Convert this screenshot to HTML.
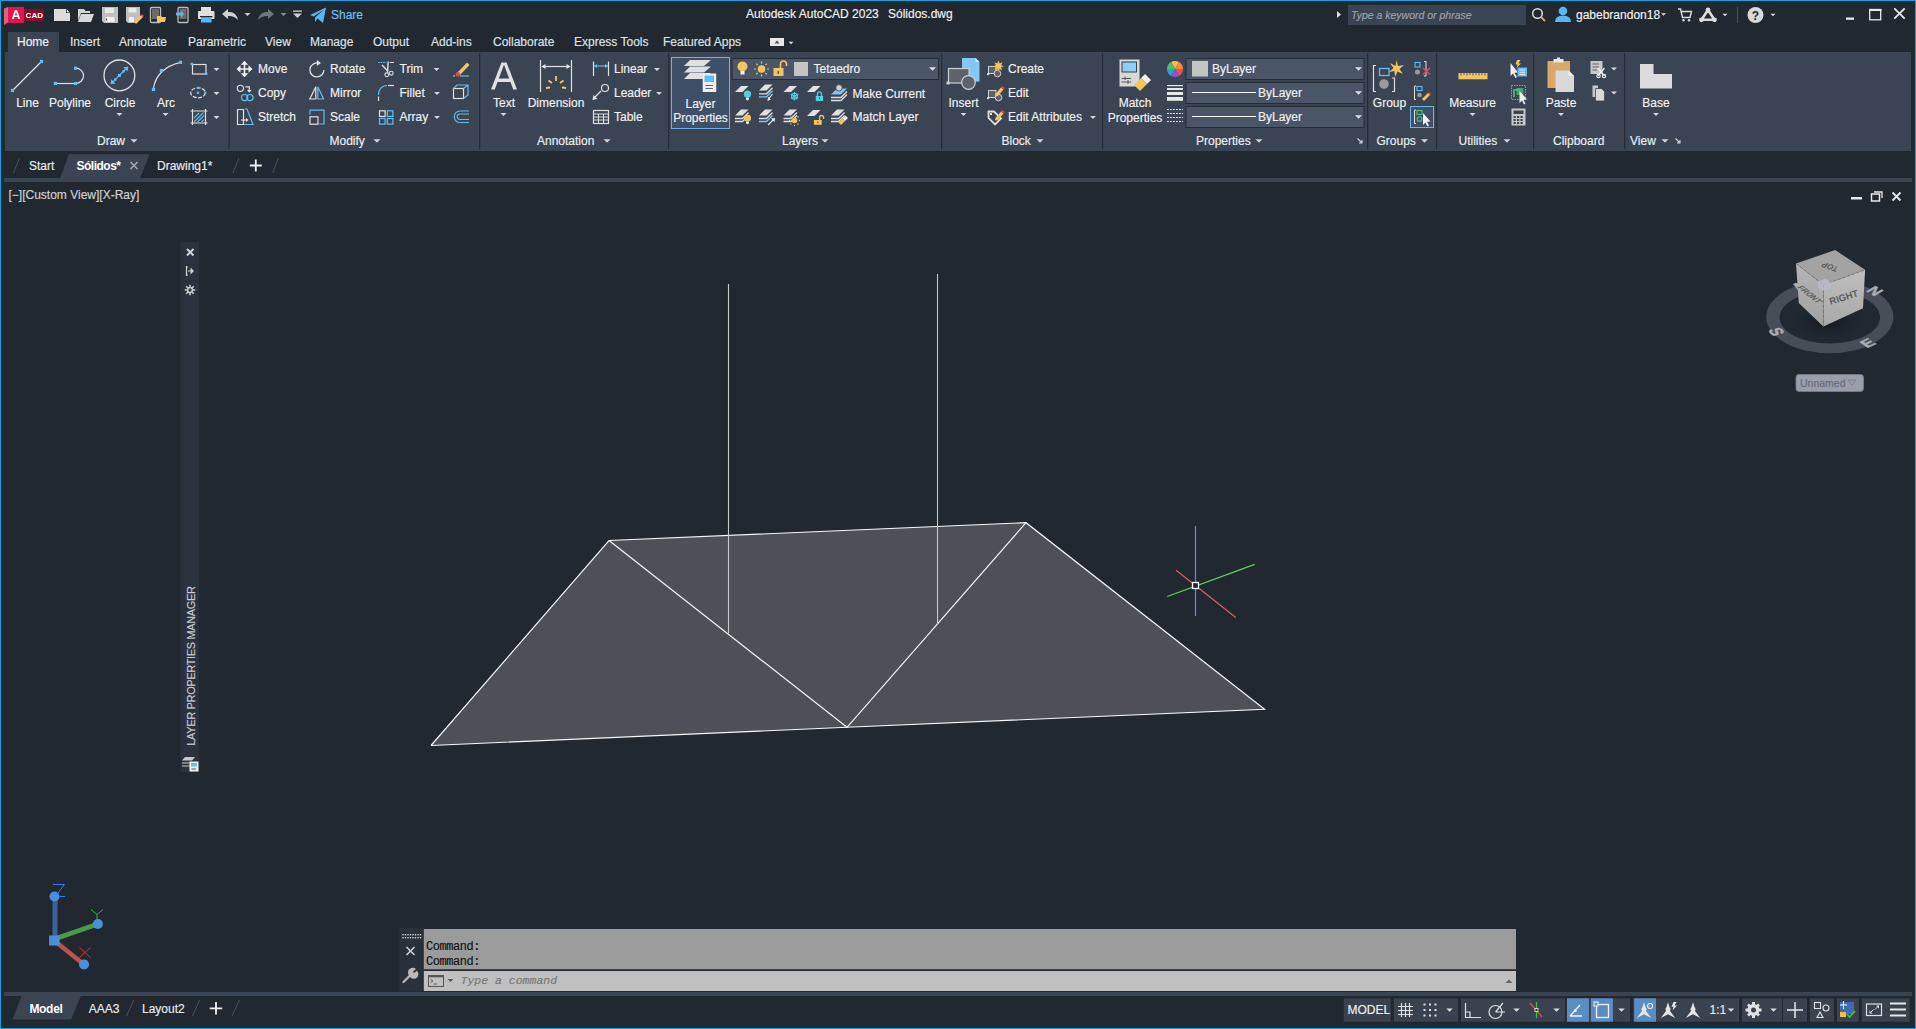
<!DOCTYPE html>
<html><head><meta charset="utf-8">
<style>
*{margin:0;padding:0;box-sizing:border-box}
html,body{width:1916px;height:1029px;overflow:hidden;background:#212830;font-family:"Liberation Sans",sans-serif;color:#f2f2f2}
svg{position:absolute;left:0;top:0}
.t{position:absolute;font-size:12px;white-space:nowrap;line-height:14px;height:14px;-webkit-text-stroke:0.15px currentColor}
.m{font-family:"Liberation Mono",monospace}
</style></head><body>
<svg width="1916" height="1029" viewBox="0 0 1916 1029">
<rect x="8" y="32" width="51" height="20" fill="#3b4453" />
<rect x="5" y="52" width="1906" height="99" fill="#3b4453" />
<rect x="228.5" y="53" width="1.2" height="96" fill="#262c36" />
<rect x="479.0" y="53" width="1.2" height="96" fill="#262c36" />
<rect x="668.0" y="53" width="1.2" height="96" fill="#262c36" />
<rect x="941.0" y="53" width="1.2" height="96" fill="#262c36" />
<rect x="1102.0" y="53" width="1.2" height="96" fill="#262c36" />
<rect x="1367.0" y="53" width="1.2" height="96" fill="#262c36" />
<rect x="1436.0" y="53" width="1.2" height="96" fill="#262c36" />
<rect x="1533.0" y="53" width="1.2" height="96" fill="#262c36" />
<rect x="1624.0" y="53" width="1.2" height="96" fill="#262c36" />
<rect x="4" y="178" width="1908" height="4" fill="#3b4453" />
<polygon points="60.3,178 68.9,154.2 149.5,154.2 140.1,178" fill="#3b4453"/>
<rect x="4" y="992" width="1908" height="4" fill="#3b4453" />
<polygon points="12.4,1019.6 21.5,996 80.9,996 71.1,1019.6" fill="#3b4453"/>
<rect x="0" y="0" width="1916" height="1" fill="#1a9fe3" />
<rect x="0" y="0" width="1" height="1029" fill="#1a9fe3" />
<rect x="1915" y="0" width="1" height="1029" fill="#1a9fe3" />
<rect x="0" y="1028" width="1916" height="1" fill="#1a9fe3" />
<polygon points="4,8.5 8,7 8,22.5 4,25" fill="#e06080"/>
<rect x="8" y="7" width="16" height="16" fill="#e3134d" />
<path d="M11.8,19 L14.8,10.3 L17.2,10.3 L20.2,19 L18.2,19 L17.6,17 L14.4,17 L13.8,19 Z M14.9,15.4 L17.1,15.4 L16,11.9 Z" fill="#fff"/>
<rect x="24" y="9" width="20" height="12" fill="#8a0a2c" />
<text x="25.5" y="18.2" font-family="Liberation Sans" font-weight="700" font-size="8" fill="#fff" letter-spacing="0.1">CAD</text>
<path d="M54,9 L66,9 L70,13 L70,21 L54,21 Z" fill="#dcdcdc"/><path d="M66,9 L70,13 L66,13 Z" fill="#212830"/><path d="M66.8,9.5 L69.5,12.2 L66.8,12.2Z" fill="#fff"/>
<path d="M78,9 L84,9 L85.5,11 L90,11 L90,13 L81,13 L78,21 Z" fill="#d4d4d4"/><path d="M81,14 L94,14 L91,22 L78,22 Z" fill="#d8d8d8"/>
<path d="M102,7 L118,7 L118,23 L104,23 L102,21 Z" fill="#bfbfbf"/><rect x="105" y="8" width="9" height="5" fill="#e8e8e8"/><rect x="105.5" y="17" width="9" height="5" fill="#f0f0f0"/><rect x="106" y="18.5" width="1" height="2" fill="#333"/>
<path d="M126,7 L140,7 L140,17 L134,23 L128,23 L126,21 Z" fill="#bfbfbf"/><rect x="128.5" y="8" width="8" height="4.5" fill="#e8e8e8"/><rect x="129" y="17" width="5" height="5" fill="#f0f0f0"/><path d="M134,22 L141,15 L143,17 L136,24 Z" fill="#f3c560"/><path d="M141,15 L142,14 L144,16 L143,17Z" fill="#e8455c"/>
<rect x="150.5" y="7.5" width="10" height="15" rx="1" fill="none" stroke="#bdbdbd" stroke-width="1.3"/><rect x="152" y="9" width="7" height="10" fill="#6b6b6b"/><path d="M157,16 L161,16 L162,17 L166,17 L165,22 L157,22Z" fill="#f3c560"/>
<rect x="178" y="7.5" width="10" height="15" rx="1" fill="none" stroke="#bdbdbd" stroke-width="1.3"/><rect x="179.5" y="9" width="7" height="10" fill="#6b6b6b"/><path d="M176,12.5 L181,12.5 L181,10.5 L184,14 L181,17.5 L181,15.5 L176,15.5Z" fill="#5ab6f2"/>
<rect x="201" y="7" width="10" height="4" fill="#e0e0e0"/><rect x="198" y="11" width="16.5" height="8" rx="1" fill="#e0e0e0"/><rect x="201" y="16.5" width="10.5" height="6" fill="#5ab6f2"/><rect x="200" y="16" width="12.5" height="1.2" fill="#212830"/>
<path d="M222,14 L228,9 L228,12 Q236,11 238,20 Q234,15.5 228,16 L228,19 Z" fill="#cfcfcf"/>
<polygon points="244.5,13.0 250.5,13.0 247.5,16.0" fill="#cfcfcf"/>
<path d="M274,14 L268,9 L268,12 Q260,11 258,20 Q262,15.5 268,16 L268,19 Z" fill="#6f7680"/>
<polygon points="280.5,13.0 286.5,13.0 283.5,16.0" fill="#8a9099"/>
<rect x="293" y="10.5" width="9" height="1.3" fill="#cfcfcf" />
<polygon points="293,13.5 302,13.5 297.5,18" fill="#cfcfcf"/>
<path d="M310,15 L326,7.5 L323,23 L317.5,18.5 L315,22 L315,17.5 L324,9.5 L313.5,16.5 Z" fill="#5ab6f2"/>
<polygon points="1337,11 1341,14.5 1337,18" fill="#e0e0e0"/>
<rect x="1348" y="5" width="178" height="20" fill="#3b4453" />
<circle cx="1537.5" cy="13.5" r="4.8" fill="none" stroke="#dcdcdc" stroke-width="1.5"/><line x1="1541" y1="17" x2="1545" y2="21" stroke="#e0a050" stroke-width="2"/>
<circle cx="1563" cy="11" r="4.3" fill="#5ab6f2"/><path d="M1555,22 Q1555,15.5 1563,15.5 Q1571,15.5 1571,22Z" fill="#5ab6f2"/>
<polygon points="1661.0,13.25 1666.0,13.25 1663.5,15.75" fill="#dcdcdc"/>
<path d="M1678,9 L1680.5,9 L1682.5,17.5 L1690,17.5 L1691.5,11.5 L1681.5,11.5" fill="none" stroke="#dcdcdc" stroke-width="1.4"/><circle cx="1683.5" cy="20.3" r="1.2" fill="#dcdcdc"/><circle cx="1689" cy="20.3" r="1.2" fill="#dcdcdc"/>
<path d="M1708,10 L1714.5,19.8 L1701.5,19.8 Z" fill="none" stroke="#dcdcdc" stroke-width="2.6" stroke-linejoin="round"/><circle cx="1708" cy="10" r="2.4" fill="#dcdcdc"/><circle cx="1701.5" cy="19.8" r="2.4" fill="#dcdcdc"/><circle cx="1714.5" cy="19.8" r="2.4" fill="#dcdcdc"/>
<polygon points="1722.5,13.75 1727.5,13.75 1725,16.25" fill="#dcdcdc"/>
<rect x="1737" y="7" width="1" height="16" fill="#4a5260" />
<circle cx="1755.5" cy="15" r="8" fill="#d8d8d8"/><text x="1755.5" y="19.5" text-anchor="middle" font-family="Liberation Sans" font-weight="700" font-size="12" fill="#212830">?</text>
<polygon points="1770.5,13.75 1775.5,13.75 1773,16.25" fill="#dcdcdc"/>
<rect x="1846" y="17.5" width="8" height="2.3" fill="#e8e8e8" />
<rect x="1869.7" y="9.5" width="11" height="10.3" fill="none" stroke="#e8e8e8" stroke-width="1.3"/><rect x="1869" y="9" width="12.5" height="2" fill="#e8e8e8"/>
<path d="M1894.3,8.3 L1904.7,18.7 M1904.7,8.3 L1894.3,18.7" stroke="#e8e8e8" stroke-width="1.8"/>
<rect x="770" y="38" width="14" height="8" fill="#e8e8e8" />
<polygon points="774.5,43.5 779.5,43.5 777,40.5" fill="#555"/>
<polygon points="788.5,41.75 793.5,41.75 791,44.25" fill="#dcdcdc"/>
<line x1="13" y1="90" x2="41.5" y2="61.5" stroke="#e0e0e0" stroke-width="1.2"/>
<rect x="10.9" y="88.9" width="3.2" height="3.2" fill="#62bcf5"/>
<rect x="39.9" y="59.9" width="3.2" height="3.2" fill="#62bcf5"/>
<line x1="55.5" y1="83.5" x2="75.5" y2="83.5" stroke="#e0e0e0" stroke-width="1.2"/><path d="M75.5,68.2 A8,7.65 0 0 1 75.5,83.5" fill="none" stroke="#e0e0e0" stroke-width="1.2"/>
<rect x="53.8" y="81.9" width="3.2" height="3.2" fill="#62bcf5"/>
<rect x="74.0" y="81.9" width="3.2" height="3.2" fill="#62bcf5"/>
<rect x="74.0" y="66.60000000000001" width="3.2" height="3.2" fill="#62bcf5"/>
<circle cx="119.4" cy="75.4" r="15.4" fill="none" stroke="#e0e0e0" stroke-width="1.3"/>
<line x1="111.5" y1="83.3" x2="127.3" y2="67.5" stroke="#62bcf5" stroke-width="1.2"/><polygon points="110.5,84.3 111.3,79.2 115.6,83.5" fill="#62bcf5"/><polygon points="128.3,66.5 123.2,67.3 127.5,71.6" fill="#62bcf5"/>
<rect x="117.9" y="73.9" width="3" height="3" fill="#62bcf5"/>
<rect x="114.0" y="78.39999999999999" width="2.4" height="2.4" fill="#62bcf5"/>
<rect x="122.39999999999999" y="70.0" width="2.4" height="2.4" fill="#62bcf5"/>
<polygon points="116.4,113.0 122.4,113.0 119.4,116.0" fill="#d8d8d8"/>
<path d="M153.5,88 Q157,68 180.5,62.3" fill="none" stroke="#e0e0e0" stroke-width="1.2"/>
<rect x="151.9" y="87.9" width="3.2" height="3.2" fill="#62bcf5"/>
<rect x="159.8" y="68.9" width="3.2" height="3.2" fill="#62bcf5"/>
<rect x="178.9" y="60.699999999999996" width="3.2" height="3.2" fill="#62bcf5"/>
<polygon points="162.5,113.0 168.5,113.0 165.5,116.0" fill="#d8d8d8"/>
<rect x="192.5" y="64.5" width="13.5" height="9.5" fill="none" stroke="#e0e0e0" stroke-width="1.2"/>
<rect x="190.55" y="62.75" width="2.5" height="2.5" fill="#62bcf5"/>
<rect x="204.95" y="72.55" width="2.5" height="2.5" fill="#62bcf5"/>
<polygon points="213.5,68.0 219.5,68.0 216.5,71.0" fill="#d8d8d8"/>
<ellipse cx="198" cy="92.8" rx="7.3" ry="5" fill="none" stroke="#e0e0e0" stroke-width="1.2" stroke-dasharray="4,1.5"/>
<rect x="196.9" y="91.7" width="2.2" height="2.2" fill="#62bcf5"/>
<rect x="204.1" y="91.7" width="2.2" height="2.2" fill="#62bcf5"/>
<rect x="196.9" y="86.7" width="2.2" height="2.2" fill="#62bcf5"/>
<polygon points="213.5,92.0 219.5,92.0 216.5,95.0" fill="#d8d8d8"/>
<path d="M190.5,111 L207.5,111 M190.5,123 L207.5,123 M192.5,109 L192.5,125 M205.5,109 L205.5,125" stroke="#e0e0e0" stroke-width="1.2"/>
<path d="M194,118 L199,113 M194,122 L203.5,112.5 M197.5,122 L204,115.5 M201.5,122 L204,119.5" stroke="#62bcf5" stroke-width="1.1"/>
<polygon points="213.5,116.0 219.5,116.0 216.5,119.0" fill="#d8d8d8"/>
<polygon points="130.5,139.25 137.5,139.25 134,142.75" fill="#d4d4d4"/>
<path d="M244.5,63 L244.5,75 M238.5,69 L250.5,69" stroke="#f0f0f0" stroke-width="1.6"/><polygon points="244.5,60.8 240.8,64.8 248.2,64.8" fill="#f0f0f0"/><polygon points="244.5,77.2 240.8,73.2 248.2,73.2" fill="#f0f0f0"/><polygon points="236.5,69 240.5,65.3 240.5,72.7" fill="#f0f0f0"/><polygon points="252.5,69 248.5,65.3 248.5,72.7" fill="#f0f0f0"/>
<path d="M323.9,70 A7,7 0 1 1 317.5,63" fill="none" stroke="#e0e0e0" stroke-width="1.3"/><polygon points="316.8,60 316.8,66 321,63" fill="#e0e0e0"/>
<path d="M378.2,62.5 L386.3,62.5" stroke="#62bcf5" stroke-width="1" stroke-dasharray="1.6,0.9"/><path d="M389.8,62.5 L394,62.5" stroke="#e0e0e0" stroke-width="1"/>
<path d="M382,65 L388.2,71.5 M388.2,61.5 L387.5,72.5" stroke="#e0e0e0" stroke-width="1.4"/><circle cx="386.8" cy="74.8" r="1.9" fill="none" stroke="#e0e0e0" stroke-width="1.1"/><circle cx="391.2" cy="73.2" r="1.9" fill="none" stroke="#e0e0e0" stroke-width="1.1"/>
<polygon points="433.5,68.0 439.5,68.0 436.5,71.0" fill="#d8d8d8"/>
<path d="M457,73 L467,62.5 L469.5,65 L459.5,75.5 Z" fill="#f3c560"/><circle cx="457.8" cy="74.2" r="2.2" fill="#e8455c"/><line x1="460" y1="76" x2="469" y2="76" stroke="#62bcf5" stroke-width="1.2"/><line x1="453" y1="76" x2="455" y2="76" stroke="#e0e0e0" stroke-width="1"/>
<circle cx="240.4" cy="88.3" r="3.1" fill="none" stroke="#e0e0e0" stroke-width="1.1"/><path d="M245.3,86.8 L249.3,86.8 L249.3,90.5" fill="none" stroke="#e0e0e0" stroke-width="1.2"/><polygon points="247,90 251.6,90 249.3,92.8" fill="#e0e0e0"/>
<circle cx="244.6" cy="97.6" r="3.1" fill="none" stroke="#62bcf5" stroke-width="1.2"/><circle cx="250" cy="97.6" r="3.1" fill="none" stroke="#62bcf5" stroke-width="1.2"/>
<polygon points="315.8,86.8 315.8,99 309.8,99" fill="none" stroke="#e0e0e0" stroke-width="1.2"/><polygon points="317.8,86.8 317.8,99 323.6,99" fill="none" stroke="#62bcf5" stroke-width="1.2"/>
<path d="M378.5,95 Q378.5,86 387,85.5" fill="none" stroke="#62bcf5" stroke-width="1.2"/><path d="M378.5,96.5 L378.5,101" stroke="#e0e0e0" stroke-width="1.2"/><line x1="388" y1="85.5" x2="394" y2="85.5" stroke="#e0e0e0" stroke-width="1.2"/>
<polygon points="434.0,92.0 440.0,92.0 437,95.0" fill="#d8d8d8"/>
<rect x="453.5" y="88.5" width="10" height="10" fill="none" stroke="#e0e0e0" stroke-width="1.2"/><path d="M453.5,88.5 L457,85 L468,85 L468,95 L463.5,98.5 M463.5,88.5 L468,85" fill="none" stroke="#62bcf5" stroke-width="1.2"/>
<path d="M237.5,109.5 L243.5,109.5 L243.5,124.5 L237.5,124.5 Z" fill="none" stroke="#e0e0e0" stroke-width="1.2"/><path d="M245,109 L247,109 L253,124.5 L244,124.5" fill="none" stroke="#62bcf5" stroke-width="1.2"/><path d="M241,120 L247,120" stroke="#e0e0e0" stroke-width="1.2"/><polygon points="248.5,120 246,118 246,122" fill="#e0e0e0"/>
<path d="M310,114.5 L310,110.2 L324,110.2 L324,124 L319.3,124" fill="none" stroke="#62bcf5" stroke-width="1.2"/><rect x="310" y="116.8" width="8" height="7.4" fill="none" stroke="#e0e0e0" stroke-width="1.2"/>
<rect x="379.5" y="110.8" width="5.6" height="5.6" fill="none" stroke="#e0e0e0" stroke-width="1.2"/>
<rect x="379.5" y="118.5" width="5.6" height="5.6" fill="none" stroke="#62bcf5" stroke-width="1.2"/>
<rect x="387.3" y="110.8" width="5.6" height="5.6" fill="none" stroke="#62bcf5" stroke-width="1.2"/>
<rect x="387.3" y="118.5" width="5.6" height="5.6" fill="none" stroke="#62bcf5" stroke-width="1.2"/>
<polygon points="434.0,116.0 440.0,116.0 437,119.0" fill="#d8d8d8"/>
<path d="M469,111 L460,111 A5.5,5.5 0 0 0 460,122.5 L469,122.5 M469,114 L460,114 A2.6,2.6 0 0 0 460,119.5 L469,119.5" fill="none" stroke="#62bcf5" stroke-width="1.2"/>
<polygon points="373.5,139.25 380.5,139.25 377,142.75" fill="#d4d4d4"/>
<path d="M501.5,62.5 L506.5,62.5 L517,89.5 L513.2,89.5 L510.5,82 L497.5,82 L494.8,89.5 L491,89.5 Z M498.8,78.5 L509.2,78.5 L504,64.8 Z" fill="#e0e0e0"/>
<polygon points="500.5,113.0 506.5,113.0 503.5,116.0" fill="#d8d8d8"/>
<path d="M540.5,60 L540.5,92 M571.5,60 L571.5,92" stroke="#e0e0e0" stroke-width="1.2"/><path d="M542,66.5 L570,66.5" stroke="#e4e4e4" stroke-width="1.2"/><polygon points="541.5,66.5 545.5,64 545.5,69" fill="#e4e4e4"/><polygon points="570.5,66.5 566.5,64 566.5,69" fill="#e4e4e4"/>
<path d="M556,76 L556,81 M548.5,80.5 L552,83 M563.5,80.5 L560,83 M546,88 L550,87.5 M566,88 L562,87.5" stroke="#f3c560" stroke-width="1.8"/>
<path d="M593.5,61.5 L593.5,76 M608.5,61.5 L608.5,76" stroke="#e0e0e0" stroke-width="1.2"/><path d="M594,66 L608,66" stroke="#62bcf5" stroke-width="1.2"/><polygon points="594,66 597,64 597,68" fill="#62bcf5"/><polygon points="608,66 605,64 605,68" fill="#62bcf5"/>
<polygon points="654.0,68.0 660.0,68.0 657,71.0" fill="#d8d8d8"/>
<path d="M593,99 L601,91" stroke="#e0e0e0" stroke-width="1.2"/><polygon points="592.5,100 593.5,95 597.5,99" fill="#e0e0e0"/><circle cx="605" cy="88" r="3.5" fill="none" stroke="#e0e0e0" stroke-width="1.2"/>
<polygon points="656.0,92.0 662.0,92.0 659,95.0" fill="#d8d8d8"/>
<rect x="593.5" y="110.5" width="15" height="13" fill="none" stroke="#e0e0e0" stroke-width="1.2"/><path d="M593.5,114 L608.5,114 M593.5,117 L608.5,117 M593.5,120 L608.5,120 M598.5,114 L598.5,123.5 M603.5,114 L603.5,123.5" stroke="#e0e0e0" stroke-width="1"/>
<polygon points="603.5,139.25 610.5,139.25 607,142.75" fill="#d4d4d4"/>
<rect x="671.5" y="57.5" width="58" height="71" fill="#3e5068" stroke="#6fb3e3" stroke-width="1"/>
<polygon points="690,60 711,60 704,66 684,66" fill="#e0e0e0"/>
<polygon points="690,66.5 711,66.5 704,72.5 684,72.5" fill="#e0e0e0"/>
<polygon points="690,73 711,73 704,79 684,79" fill="#e0e0e0"/>
<rect x="702.7" y="73.5" width="13.5" height="18.5" fill="#f0f0f0" />
<rect x="704.5" y="75.5" width="9.5" height="6.5" fill="#62bcf5" />
<path d="M705.5,85.5 L713,85.5 M705.5,88.5 L713,88.5" stroke="#555" stroke-width="0.9"/>
<rect x="732" y="58.5" width="206.5" height="21" fill="#4a5568" stroke="#262c36" stroke-width="1"/>
<circle cx="742.5" cy="66.5" r="5" fill="#f3c560"/><rect x="740.5" y="71" width="4" height="3.5" fill="#f0f0f0"/>
<circle cx="761.5" cy="69" r="3.8" fill="#f3c560"/><path d="M761.5,61.5 L761.5,63.5 M761.5,74.5 L761.5,76.5 M754,69 L756,69 M767,69 L769,69 M756.2,63.7 L757.6,65.1 M765.4,72.9 L766.8,74.3 M766.8,63.7 L765.4,65.1 M757.6,72.9 L756.2,74.3" stroke="#f3c560" stroke-width="1.2"/>
<rect x="773.5" y="68" width="10" height="8" fill="#f3c560"/><path d="M780.5,68 L780.5,64 A3,3 0 0 1 786.5,64 L786.5,66" fill="none" stroke="#f3c560" stroke-width="1.6"/><rect x="777.5" y="71" width="1.5" height="3" fill="#4a5568"/>
<rect x="794" y="62" width="14" height="14" fill="#c4c4c4" />
<polygon points="929.0,67.25 936.0,67.25 932.5,70.75" fill="#e0e0e0"/>
<polygon points="735,92 741,86 748.5,86 742.5,92" fill="#e0e0e0"/>
<circle cx="747.5" cy="94.2" r="3.6" fill="#4fd0dc"/><path d="M746,97.8 L749,97.8 L749,99.5 L747.5,100.5 L746,99.5Z" fill="#f0f0f0"/>
<polygon points="759,90.5 765,84.5 772.5,84.5 766.5,90.5" fill="#e0e0e0"/>
<path d="M759,93.8 L766.5,93.8 L772.5,87.8" fill="none" stroke="#e0e0e0" stroke-width="1.3"/>
<path d="M759,96.8 L766.5,96.8 L772.5,90.8" fill="none" stroke="#7cc4f5" stroke-width="1.3"/>
<path d="M772.5,94 L768.2,99.5" stroke="#f0f0f0" stroke-width="1.1"/><polygon points="767.5,101 768,96.8 771,99.5" fill="#f0f0f0"/>
<polygon points="783.5,92 789.5,86 797.0,86 791.0,92" fill="#e0e0e0"/>
<g stroke="#4fd0dc" stroke-width="1.2"><path d="M794.5,92 L794.5,100.6 M790.8,94.1 L798.2,98.5 M798.2,94.1 L790.8,98.5"/></g><circle cx="794.5" cy="96.3" r="3" fill="none" stroke="#4fd0dc" stroke-width="1.1"/>
<polygon points="807,92 813,86 820.5,86 814.5,92" fill="#e0e0e0"/>
<rect x="815.8" y="96" width="7.3" height="5" fill="#4fd0dc"/><path d="M817.4,96 L817.4,94 A2.05,2.05 0 0 1 821.5,94 L821.5,96" fill="none" stroke="#4fd0dc" stroke-width="1.3"/><rect x="819" y="97.6" width="1" height="1.5" fill="#3b4453"/>
<polygon points="831,94.5 837,88.5 847,88.5 841,94.5" fill="#7cc4f5"/>
<path d="M831,97.5 L841,97.5 L847,91.5" fill="none" stroke="#e0e0e0" stroke-width="1.3"/>
<path d="M831,100.5 L841,100.5 L847,94.5" fill="none" stroke="#e0e0e0" stroke-width="1.3"/>
<circle cx="839" cy="87.8" r="3.2" fill="#cfcfcf" stroke="#3b4453" stroke-width="0.8"/>
<polygon points="735,115.5 741,109.5 748.5,109.5 742.5,115.5" fill="#e0e0e0"/>
<path d="M735,118.5 L742.5,118.5 L748.5,112.5" fill="none" stroke="#e0e0e0" stroke-width="1.3"/>
<path d="M735,121.5 L742.5,121.5 L748.5,115.5" fill="none" stroke="#e0e0e0" stroke-width="1.3"/>
<circle cx="747.5" cy="118" r="3.6" fill="#f3c560"/><path d="M746,121.6 L749,121.6 L749,123.3 L747.5,124.3 L746,123.3Z" fill="#f0f0f0"/>
<polygon points="759,115.5 765,109.5 772.5,109.5 766.5,115.5" fill="#e0e0e0"/>
<path d="M759,118.5 L766.5,118.5 L772.5,112.5" fill="none" stroke="#e0e0e0" stroke-width="1.3"/>
<path d="M759,121.5 L766.5,121.5 L772.5,115.5" fill="none" stroke="#7cc4f5" stroke-width="1.3"/>
<path d="M768,125 L773.5,119.5" stroke="#f0f0f0" stroke-width="1.1"/><polygon points="775,118 771,118.5 774.5,122" fill="#f0f0f0"/>
<polygon points="783.5,115.5 789.5,109.5 797.0,109.5 791.0,115.5" fill="#e0e0e0"/>
<path d="M783.5,118.5 L791.0,118.5 L797.0,112.5" fill="none" stroke="#e0e0e0" stroke-width="1.3"/>
<path d="M783.5,121.5 L791.0,121.5 L797.0,115.5" fill="none" stroke="#e0e0e0" stroke-width="1.3"/>
<circle cx="794.5" cy="120.5" r="2.8" fill="#f3c560"/>
<circle cx="799.50" cy="120.50" r="0.7" fill="#f3c560"/>
<circle cx="798.04" cy="124.04" r="0.7" fill="#f3c560"/>
<circle cx="794.50" cy="125.50" r="0.7" fill="#f3c560"/>
<circle cx="790.96" cy="124.04" r="0.7" fill="#f3c560"/>
<circle cx="789.50" cy="120.50" r="0.7" fill="#f3c560"/>
<circle cx="790.96" cy="116.96" r="0.7" fill="#f3c560"/>
<circle cx="794.50" cy="115.50" r="0.7" fill="#f3c560"/>
<circle cx="798.04" cy="116.96" r="0.7" fill="#f3c560"/>
<polygon points="807,116 813,110 820.5,110 814.5,116" fill="#e0e0e0"/>
<rect x="813.9" y="120" width="7.8" height="4.8" fill="#f3c560"/><path d="M819.6,120 L819.6,117.5 A2,2 0 0 1 823.6,117.5 L823.6,119" fill="none" stroke="#f3c560" stroke-width="1.3"/><rect x="817.3" y="121.6" width="1" height="1.4" fill="#3b4453"/>
<polygon points="831,115.5 837,109.5 844.5,109.5 838.5,115.5" fill="#e0e0e0"/>
<path d="M831,118.5 L838.5,118.5 L844.5,112.5" fill="none" stroke="#e0e0e0" stroke-width="1.3"/>
<path d="M831,121.5 L838.5,121.5 L844.5,115.5" fill="none" stroke="#e0e0e0" stroke-width="1.3"/>
<path d="M838.5,122.5 L842.5,118.5 L845,121 L841,125Z" fill="#f3c560"/><path d="M842.5,118.5 L845.5,115.5 L848,118 L845,121Z" fill="#f0f0f0"/>
<polygon points="821.5,139.25 828.5,139.25 825,142.75" fill="#d4d4d4"/>
<path d="M962,58 L975.5,58 L979.5,62 L979.5,81.5 L962,81.5 Z" fill="#82c8f6"/><path d="M975.5,58 L979.5,62 L975.5,62Z" fill="#d8eefc"/>
<rect x="948.5" y="68.5" width="20.5" height="14.5" fill="#5d626c" stroke="#cfcfcf" stroke-width="1.2"/><circle cx="968.5" cy="82.5" r="6.8" fill="#5d626c" stroke="#cfcfcf" stroke-width="1.2"/><rect x="946.5" y="81.5" width="3" height="3" fill="#cfcfcf"/>
<polygon points="960.5,113.0 966.5,113.0 963.5,116.0" fill="#d8d8d8"/>
<rect x="988.5" y="66.5" width="7.5" height="7" fill="#5d626c" stroke="#cfcfcf" stroke-width="1"/><circle cx="997.5" cy="73.5" r="3.3" fill="#5d626c" stroke="#cfcfcf" stroke-width="1"/><rect x="987" y="73" width="2.2" height="2.2" fill="#cfcfcf"/>
<polygon points="998.6,60.5 999.6,63.5 1002.5,62.2 1001.2,65.2 1004,66.3 1001,67.3 1002.2,70.2 999.4,69 998.4,71.8 997.4,69 994.6,70.2 995.8,67.3 993,66.3 995.8,65.2 994.6,62.2 997.4,63.5" fill="#f3c560"/>
<rect x="988.5" y="90.5" width="7.5" height="7" fill="#5d626c" stroke="#cfcfcf" stroke-width="1"/><circle cx="998.5" cy="97.5" r="3.3" fill="#5d626c" stroke="#cfcfcf" stroke-width="1"/><rect x="987" y="97" width="2.2" height="2.2" fill="#cfcfcf"/>
<path d="M995.5,94 L1001,87.5 L1003.5,89.5 L998,96 L995,96.5Z" fill="#f3c560"/><path d="M1001,87.5 L1002.2,86 L1004.7,88 L1003.5,89.5Z" fill="#e8455c"/>
<path d="M988.5,111.5 L994,111.5 L1001,118.5 L995,124.5 L988.5,118 Z" fill="none" stroke="#e0e0e0" stroke-width="1.8"/><rect x="990" y="113" width="2" height="2" fill="#e0e0e0"/>
<path d="M995.5,118 L1001,111.5 L1003.5,113.5 L998,120 L995,120.5Z" fill="#f3c560"/><path d="M1001,111.5 L1002.2,110 L1004.7,112 L1003.5,113.5Z" fill="#e8455c"/>
<polygon points="1090.0,116.0 1096.0,116.0 1093,119.0" fill="#d8d8d8"/>
<polygon points="1036.5,139.25 1043.5,139.25 1040,142.75" fill="#d4d4d4"/>
<rect x="1119.5" y="59.5" width="20" height="27" fill="#d8d8d8" />
<rect x="1122" y="62" width="14.5" height="10" fill="#8ccff8" stroke="#2a2f38" stroke-width="0.9"/>
<path d="M1121.5,78.5 L1131,78.5 M1121.5,82 L1131,82 M1125,76.5 L1125,80 M1128,80 L1128,84" stroke="#555" stroke-width="1"/>
<path d="M1134,85 L1141,78 L1147,84 L1140,91 Z" fill="#f3c560"/><path d="M1141,78 L1145,74 L1151,80 L1147,84Z" fill="#f0f0f0"/>
<path d="M1175,69 L1171.00,62.07 A8,8 0 0 1 1179.00,62.07 Z" fill="#f6c13c"/>
<path d="M1175,69 L1179.00,62.07 A8,8 0 0 1 1183.00,69.00 Z" fill="#f5883a"/>
<path d="M1175,69 L1183.00,69.00 A8,8 0 0 1 1179.00,75.93 Z" fill="#e8505a"/>
<path d="M1175,69 L1179.00,75.93 A8,8 0 0 1 1171.00,75.93 Z" fill="#8a4fe0"/>
<path d="M1175,69 L1171.00,75.93 A8,8 0 0 1 1167.00,69.00 Z" fill="#1fa8d0"/>
<path d="M1175,69 L1167.00,69.00 A8,8 0 0 1 1171.00,62.07 Z" fill="#4cbf70"/>
<rect x="1167" y="85" width="16" height="1.2" fill="#e8e8e8" />
<rect x="1167" y="88" width="16" height="2" fill="#e8e8e8" />
<rect x="1167" y="92" width="16" height="3" fill="#e8e8e8" />
<rect x="1167" y="97" width="16" height="3.8" fill="#e8e8e8" />
<line x1="1167" y1="109.5" x2="1183" y2="109.5" stroke="#e0e0e0" stroke-width="1.2" stroke-dasharray="2,1"/>
<line x1="1167" y1="113.5" x2="1183" y2="113.5" stroke="#e0e0e0" stroke-width="1.2" stroke-dasharray="2,1"/>
<line x1="1167" y1="117.5" x2="1183" y2="117.5" stroke="#e0e0e0" stroke-width="1.2" stroke-dasharray="2,1"/>
<line x1="1167" y1="121.5" x2="1183" y2="121.5" stroke="#e0e0e0" stroke-width="1.2" stroke-dasharray="2,1"/>
<rect x="1186" y="58.5" width="178" height="21" fill="#4a5568" stroke="#262c36" stroke-width="1"/>
<polygon points="1355.0,67.25 1362.0,67.25 1358.5,70.75" fill="#e0e0e0"/>
<rect x="1186" y="82.5" width="178" height="21" fill="#4a5568" stroke="#262c36" stroke-width="1"/>
<polygon points="1355.0,91.25 1362.0,91.25 1358.5,94.75" fill="#e0e0e0"/>
<rect x="1186" y="106.5" width="178" height="21" fill="#4a5568" stroke="#262c36" stroke-width="1"/>
<polygon points="1355.0,115.25 1362.0,115.25 1358.5,118.75" fill="#e0e0e0"/>
<rect x="1192" y="61" width="16" height="15.5" fill="#c4c4c4" />
<rect x="1192" y="92" width="64" height="1" fill="#fafafa" />
<rect x="1192" y="116" width="64" height="1" fill="#fafafa" />
<polygon points="1255.5,139.25 1262.5,139.25 1259,142.75" fill="#d4d4d4"/>
<path d="M1357.5,138.5 L1362,143 M1362,140 L1362,143 L1359,143" stroke="#d4d4d4" stroke-width="1.1" fill="none"/>
<path d="M1376,65.5 L1373.5,65.5 L1373.5,91.5 L1376,91.5 M1392,78 L1394.5,78 L1394.5,91.5 L1392,91.5" fill="none" stroke="#e0e0e0" stroke-width="1.2"/>
<rect x="1379.5" y="68.5" width="9.5" height="7" fill="none" stroke="#62bcf5" stroke-width="1.3"/>
<circle cx="1384" cy="84" r="4.8" fill="#9a9a9a"/>
<polygon points="1396.5,60 1398,66 1404,65 1399.5,69 1403,74 1397.5,71.5 1395,77 1394.5,71 1389,72 1393.5,68 1390,63 1395.5,66" fill="#f3c560"/>
<rect x="1415" y="62.5" width="5" height="4.5" fill="none" stroke="#62bcf5" stroke-width="1.1"/><circle cx="1417.5" cy="72" r="2.5" fill="#9a9a9a"/><path d="M1424,61.5 L1426,61.5 L1426,76 L1424,76" fill="none" stroke="#e0e0e0" stroke-width="1"/><path d="M1423,68 L1430,74.5 M1430,68 L1423,74.5" stroke="#e8455c" stroke-width="1.6"/>
<path d="M1416,86 L1414.5,86 L1414.5,99.5 L1416,99.5" fill="none" stroke="#e0e0e0" stroke-width="1"/><rect x="1417" y="86.5" width="5" height="4" fill="none" stroke="#62bcf5" stroke-width="1.1"/><circle cx="1419.5" cy="95" r="2.3" fill="#9a9a9a"/><path d="M1422,99 L1428,93 L1430,95 L1424,101Z" fill="#f3c560"/><path d="M1428,93 L1429,92 L1431,94 L1430,95Z" fill="#e8455c"/>
<rect x="1410.5" y="106.5" width="23" height="21" fill="#3e5068" stroke="#6fb3e3" stroke-width="1"/>
<path d="M1416,110 L1414.5,110 L1414.5,123.5 L1416,123.5" fill="none" stroke="#e0e0e0" stroke-width="1"/><rect x="1417" y="110.5" width="5" height="4" fill="none" stroke="#52c27a" stroke-width="1.1"/><circle cx="1419.5" cy="119" r="2.3" fill="none" stroke="#52c27a" stroke-width="1.1"/><polygon points="1423,113 1423,125 1425.5,122.5 1427.5,126.5 1429,125.8 1427,121.8 1430.5,121.5" fill="#f0f0f0"/>
<polygon points="1421.0,139.25 1428.0,139.25 1424.5,142.75" fill="#d4d4d4"/>
<rect x="1458.5" y="73" width="29" height="6.3" fill="#f3c560" />
<path d="M1461,73 L1461,75.5 M1464,73 L1464,75 M1467,73 L1467,75.5 M1470,73 L1470,75 M1473,73 L1473,75.5 M1476,73 L1476,75 M1479,73 L1479,75.5 M1482,73 L1482,75 M1485,73 L1485,75.5" stroke="#3b4453" stroke-width="0.8"/>
<polygon points="1469.5,113.0 1475.5,113.0 1472.5,116.0" fill="#d8d8d8"/>
<polygon points="1510.5,63 1510.5,76 1513,73.5 1515.5,78 1517,77 1514.5,72.8 1518,72.5" fill="#f0f0f0"/><rect x="1517.5" y="67.5" width="9.5" height="9" fill="#62bcf5"/><path d="M1519.5,70 L1525,70 M1519.5,72.3 L1525,72.3 M1519.5,74.5 L1525,74.5" stroke="#f0f0f0" stroke-width="0.9"/><polygon points="1517,60 1520.5,60 1518.5,63.5 1521,63.5 1516.5,68 1517.5,64.5 1515.5,64.5" fill="#f3c560"/>
<rect x="1511.5" y="85.5" width="14" height="14" fill="none" stroke="#52c27a" stroke-width="1" stroke-dasharray="1.5,1"/><path d="M1514,97 L1514,90 L1520,90" fill="none" stroke="#52c27a" stroke-width="1.6"/><rect x="1516.5" y="88" width="7" height="7" fill="#52c27a" opacity="0.7"/><polygon points="1519.5,91 1519.5,103 1522,100.5 1524,104.5 1525.5,103.8 1523.5,99.8 1527,99.5" fill="#f0f0f0"/>
<rect x="1511.5" y="108.5" width="14" height="17" fill="#c8c8c8" />
<rect x="1513.5" y="110.5" width="10" height="3.5" fill="#3b4453" />
<rect x="1513.5" y="116" width="2.2" height="2" fill="#3b4453" />
<rect x="1517" y="116" width="2.2" height="2" fill="#3b4453" />
<rect x="1520.5" y="116" width="2.2" height="2" fill="#3b4453" />
<rect x="1513.5" y="119" width="2.2" height="2" fill="#3b4453" />
<rect x="1517" y="119" width="2.2" height="2" fill="#3b4453" />
<rect x="1520.5" y="119" width="2.2" height="2" fill="#3b4453" />
<rect x="1513.5" y="122" width="2.2" height="2" fill="#3b4453" />
<rect x="1517" y="122" width="2.2" height="2" fill="#3b4453" />
<rect x="1520.5" y="122" width="2.2" height="2" fill="#3b4453" />
<polygon points="1503.5,139.25 1510.5,139.25 1507,142.75" fill="#d4d4d4"/>
<rect x="1547.5" y="61" width="22.5" height="27" fill="#d9a86a"/><rect x="1553.5" y="59" width="10" height="3.5" fill="#e8e8e8"/><rect x="1557" y="57.5" width="3" height="2" fill="#e8e8e8"/>
<path d="M1555.5,70.5 L1568.5,70.5 L1574,76 L1574,92 L1555.5,92 Z" fill="#d8d8d8"/><path d="M1568.5,70.5 L1574,76 L1568.5,76 Z" fill="#f4f4f4"/>
<polygon points="1558.0,113.0 1564.0,113.0 1561,116.0" fill="#d8d8d8"/>
<rect x="1590.5" y="61" width="12" height="13" fill="#c8c8c8"/><path d="M1592.5,64 L1599,64 M1592.5,67 L1599,67 M1592.5,70 L1597,70" stroke="#555" stroke-width="0.9"/><path d="M1598,68 L1604.5,76 M1604.5,68 L1598,76" stroke="#f0f0f0" stroke-width="1.2"/><circle cx="1598.5" cy="76" r="1.7" fill="none" stroke="#f0f0f0" stroke-width="1.1"/><circle cx="1604" cy="76" r="1.7" fill="none" stroke="#f0f0f0" stroke-width="1.1"/>
<polygon points="1611.0,67.5 1617.0,67.5 1614,70.5" fill="#d8d8d8"/>
<path d="M1592.5,85.5 L1598,85.5 L1598,97 L1592.5,97 Z" fill="#c8c8c8"/><path d="M1595.5,88.5 L1601.5,88.5 L1604.5,91.5 L1604.5,101 L1595.5,101 Z" fill="#d8d8d8" stroke="#3b4453" stroke-width="0.8"/>
<polygon points="1611.0,91.5 1617.0,91.5 1614,94.5" fill="#d8d8d8"/>
<path d="M1640,64 L1653.5,64 L1653.5,74 L1672,74 L1672,88.5 L1640,88.5 Z" fill="#dcdcdc"/>
<polygon points="1653.0,113.0 1659.0,113.0 1656,116.0" fill="#d8d8d8"/>
<polygon points="1661.5,139.25 1668.5,139.25 1665,142.75" fill="#d4d4d4"/>
<path d="M1675.5,138.5 L1680,143 M1680,140 L1680,143 L1677,143" stroke="#d4d4d4" stroke-width="1.1" fill="none"/>
<path d="M13.5,173 L19.5,158 M233,173 L239,158 M272.5,173 L278.5,158" stroke="#4a5260" stroke-width="1"/>
<path d="M130.5,162 L137.5,169 M137.5,162 L130.5,169" stroke="#a0a6ae" stroke-width="1.6"/>
<path d="M255.8,159.5 L255.8,171.5 M249.8,165.5 L261.8,165.5" stroke="#f0f0f0" stroke-width="1.8"/>
<rect x="1851" y="197" width="11" height="2.5" fill="#e8e8e8" />
<rect x="1871.5" y="194" width="8" height="7" fill="none" stroke="#e8e8e8" stroke-width="1.5"/><path d="M1874,192 L1882,192 L1882,198" fill="none" stroke="#e8e8e8" stroke-width="1.3"/>
<path d="M1892.5,192.5 L1900.5,200.5 M1900.5,192.5 L1892.5,200.5" stroke="#e8e8e8" stroke-width="1.8"/>
<rect x="180.5" y="242" width="18.5" height="530" rx="1.5" fill="#2c323d"/>
<path d="M187,249 L193.5,255.5 M193.5,249 L187,255.5" stroke="#d0d0d0" stroke-width="2"/>
<path d="M186.5,266 L186.5,276 M186.5,267 L188,267 M186.5,275 L188,275 M188,271 L191,271" stroke="#d0d0d0" stroke-width="1.2"/><polygon points="194,271 190.5,267.5 190.5,274.5" fill="#d0d0d0"/>
<g stroke="#d0d0d0" stroke-width="1.5"><circle cx="190" cy="290" r="2.4" fill="none"/><path d="M190,284.8 L190,287.2 M190,292.8 L190,295.2 M184.8,290 L187.2,290 M192.8,290 L195.2,290 M186.2,286.2 L188.1,288.1 M191.9,291.9 L193.8,293.8 M193.8,286.2 L191.9,288.1 M188.1,291.9 L186.2,293.8"/></g>
<polygon points="185,757 195,757 192,760.5 182,760.5" fill="#c8c8c8"/><path d="M182,763 L190,763 M182,766 L190,766" stroke="#c8c8c8" stroke-width="1.2"/><rect x="189.5" y="761.5" width="9" height="10" fill="#f0f0f0"/><rect x="191" y="763" width="6" height="3.5" fill="#62bcf5"/><path d="M191.5,769 L196,769" stroke="#444" stroke-width="0.9"/>
<polygon points="431,745.5 609,540.5 1026,522.7 1264.6,709.2 847,727.3" fill="#4d5057"/>
<g stroke="#f8f8f8" stroke-width="1.15" fill="none" stroke-linejoin="miter"><polyline points="431,745.5 609,540.5 1026,522.7 1264.6,709.2 847,727.3 431,745.5"/><line x1="609" y1="540.5" x2="847" y2="727.3"/><line x1="1026" y1="522.7" x2="847" y2="727.3"/></g>
<g stroke="#c8c8c8" stroke-width="1.1"><line x1="728.5" y1="284" x2="728.5" y2="633.5"/><line x1="937.5" y1="274" x2="937.5" y2="624"/></g>
<line x1="1195.5" y1="526" x2="1195.5" y2="616" stroke="#7b7ef0" stroke-width="1.2"/>
<line x1="1167.3" y1="596.5" x2="1254.7" y2="564.4" stroke="#5fd45f" stroke-width="1.2"/>
<line x1="1176.1" y1="570.3" x2="1235.8" y2="617.5" stroke="#e0605a" stroke-width="1.1"/>
<rect x="1192.5" y="582.5" width="6" height="6" fill="#212830" stroke="#ffffff" stroke-width="1.3"/>
<path fill-rule="evenodd" d="M1766.2,316.9 A63.6,36.4 0 1 0 1893.4,316.9 A63.6,36.4 0 1 0 1766.2,316.9 Z M1779.6,317.4 A50.2,26.2 0 1 0 1880,317.4 A50.2,26.2 0 1 0 1779.6,317.4 Z" fill="#474e58"/>
<defs><radialGradient id="sh" cx="0.5" cy="0.5" r="0.5"><stop offset="0" stop-color="#15191f" stop-opacity="1"/><stop offset="1" stop-color="#212830" stop-opacity="0"/></radialGradient></defs><ellipse cx="1828" cy="322" rx="46" ry="22" fill="url(#sh)"/>
<text x="0" y="0" text-anchor="middle" dominant-baseline="central" font-family="Liberation Sans" font-weight="700" font-size="19" fill="#a9adb3" stroke="#a9adb3" stroke-width="0.6" transform="translate(1874.6,291) scale(1,0.58) rotate(-135.6)">N</text>
<text x="0" y="0" text-anchor="middle" dominant-baseline="central" font-family="Liberation Sans" font-weight="700" font-size="19" fill="#a9adb3" stroke="#a9adb3" stroke-width="0.6" transform="translate(1776.6,331.7) scale(1,0.58) rotate(64)">S</text>
<text x="0" y="0" text-anchor="middle" dominant-baseline="central" font-family="Liberation Sans" font-weight="700" font-size="19" fill="#a9adb3" stroke="#a9adb3" stroke-width="0.6" transform="translate(1867.6,343) scale(1,0.58) rotate(-39.5)">E</text>
<text x="0" y="0" text-anchor="middle" dominant-baseline="central" font-family="Liberation Sans" font-weight="700" font-size="19" fill="#a9adb3" stroke="#a9adb3" stroke-width="0.6" transform="translate(1802,285) scale(1,0.58) rotate(140)">W</text>
<polygon points="1796,263.4 1835.2,250.1 1865.1,269.8 1823.4,284.8" fill="#a3a3a3"/>
<defs><linearGradient id="gf" x1="0" y1="0" x2="0" y2="1"><stop offset="0" stop-color="#b4b4b4"/><stop offset="1" stop-color="#a2a2a2"/></linearGradient><linearGradient id="gr" x1="0" y1="0" x2="0" y2="1"><stop offset="0" stop-color="#bdbdbd"/><stop offset="1" stop-color="#a9a9a9"/></linearGradient></defs><polygon points="1796,263.4 1823.4,284.8 1823.4,326.5 1798.8,303" fill="url(#gf)"/>
<polygon points="1823.4,284.8 1865.1,269.8 1863,308.3 1823.4,326.5" fill="url(#gr)"/>
<path d="M1796,263.4 L1823.4,284.8 L1865.1,269.8 M1823.4,284.8 L1823.4,326.5" stroke="#6e6e6e" stroke-width="0.8" stroke-dasharray="3,2" fill="none"/>
<polygon points="1818,281 1826,278.5 1831,283 1830,289 1822,291 1818,287" fill="#b8bcc8" opacity="0.8"/>
<text x="0" y="0" text-anchor="middle" dominant-baseline="central" font-family="Liberation Sans" font-weight="700" font-size="8" fill="#5c5c5c" transform="translate(1830,266.5) rotate(200) skewX(-15)">TOP</text>
<text x="0" y="0" text-anchor="middle" dominant-baseline="central" font-family="Liberation Sans" font-weight="700" font-size="7.5" fill="#5c5c5c" transform="translate(1809.5,294.5) rotate(38) skewX(-30)">FRONT</text>
<text x="0" y="0" text-anchor="middle" dominant-baseline="central" font-family="Liberation Sans" font-weight="700" font-size="9.5" fill="#5c5c5c" transform="translate(1843.7,297) rotate(-17)">RIGHT</text>
<rect x="1796" y="374.5" width="67.5" height="17" rx="3" fill="#9a9eaa" stroke="#7a7e8a" stroke-width="0.8"/>
<polygon points="1848,380 1856,380 1852,385" fill="none" stroke="#7a7e8a" stroke-width="0.9"/>
<g stroke-linecap="round">
<line x1="55" y1="897" x2="55" y2="938" stroke="#3d5f9a" stroke-width="5"/>
<line x1="56" y1="938.5" x2="97.9" y2="924" stroke="#4a9a48" stroke-width="4.5"/>
<line x1="56" y1="942" x2="84" y2="964.4" stroke="#c0504d" stroke-width="4.5"/>
</g>
<circle cx="54.5" cy="896.5" r="5" fill="#4a8fd9"/><circle cx="97.9" cy="924" r="5" fill="#4a8fd9"/><circle cx="84" cy="964.4" r="5" fill="#4a8fd9"/>
<rect x="49" y="935.5" width="10.5" height="10" fill="#4a8fd9" />
<path d="M53,884.5 L64.5,884.5 L56.5,895 M60,896.5 L65,896.5" stroke="#2f7cf0" stroke-width="1" fill="none"/>
<path d="M91,909.5 L97,914.5 L103,909.5 M97,914.5 L97,920" stroke="#2eb82e" stroke-width="1" fill="none"/>
<path d="M79.5,947.5 L90.5,957.5 M90.5,947.5 L79.5,957.5" stroke="#e0302a" stroke-width="1" fill="none"/>
<rect x="399.5" y="928" width="24" height="63.5" fill="#2a303a" />
<rect x="402.3" y="934" width="1.4" height="1.4" fill="#d0d0d0" />
<rect x="402.3" y="937" width="1.4" height="1.4" fill="#d0d0d0" />
<rect x="404.8" y="934" width="1.4" height="1.4" fill="#d0d0d0" />
<rect x="404.8" y="937" width="1.4" height="1.4" fill="#d0d0d0" />
<rect x="407.3" y="934" width="1.4" height="1.4" fill="#d0d0d0" />
<rect x="407.3" y="937" width="1.4" height="1.4" fill="#d0d0d0" />
<rect x="409.8" y="934" width="1.4" height="1.4" fill="#d0d0d0" />
<rect x="409.8" y="937" width="1.4" height="1.4" fill="#d0d0d0" />
<rect x="412.3" y="934" width="1.4" height="1.4" fill="#d0d0d0" />
<rect x="412.3" y="937" width="1.4" height="1.4" fill="#d0d0d0" />
<rect x="414.8" y="934" width="1.4" height="1.4" fill="#d0d0d0" />
<rect x="414.8" y="937" width="1.4" height="1.4" fill="#d0d0d0" />
<rect x="417.3" y="934" width="1.4" height="1.4" fill="#d0d0d0" />
<rect x="417.3" y="937" width="1.4" height="1.4" fill="#d0d0d0" />
<rect x="419.8" y="934" width="1.4" height="1.4" fill="#d0d0d0" />
<rect x="419.8" y="937" width="1.4" height="1.4" fill="#d0d0d0" />
<path d="M406.5,947 L414.5,955 M414.5,947 L406.5,955" stroke="#d0d0d0" stroke-width="1.6"/>
<path d="M403.5,982 L411,974.5" stroke="#b8b8b8" stroke-width="2.3" stroke-linecap="round"/><path d="M409.5,976 A4,4 0 1 1 416,969 L413,971.5 L414,973 L417,970.8 A4,4 0 0 1 410.5,977.5" fill="#b8b8b8"/>
<rect x="423.8" y="929" width="1092.2" height="40.5" fill="#9b9b9b" />
<rect x="423.8" y="969.5" width="1092.2" height="1.5" fill="#252b34" />
<rect x="423.8" y="971" width="1092.2" height="20" fill="#c0c0c0" />
<rect x="428.5" y="975.5" width="15" height="11" fill="none" stroke="#555" stroke-width="1"/><rect x="428.5" y="975.5" width="15" height="1.8" fill="#555"/><path d="M430.5,979.5 L433,981 L430.5,982.5 M433.5,984 L437,984" stroke="#555" stroke-width="0.9" fill="none"/>
<polygon points="447.5,979.0 453.5,979.0 450.5,982.0" fill="#555"/>
<polygon points="1505.5,983 1512.5,983 1509,979.5" fill="#666"/>
<path d="M126.6,1016 L133.7,1000 M192.5,1016 L199.6,1000 M232,1016 L239.4,1000" stroke="#4a5260" stroke-width="1"/>
<path d="M216,1002 L216,1014.5 M209.7,1008.3 L222.2,1008.3" stroke="#f0f0f0" stroke-width="1.8"/>
<rect x="1343.8" y="998.3" width="47.0" height="23.4" fill="#3a4250" />
<rect x="1393.9" y="998.3" width="64.19999999999982" height="23.4" fill="#3a4250" />
<rect x="1461" y="998.3" width="103.90000000000009" height="23.4" fill="#3a4250" />
<rect x="1566.9" y="998.3" width="63.09999999999991" height="23.4" fill="#3a4250" />
<rect x="1633.1" y="998.3" width="105.90000000000009" height="23.4" fill="#3a4250" />
<rect x="1742" y="998.3" width="40" height="23.4" fill="#3a4250" />
<rect x="1783" y="998.3" width="24" height="23.4" fill="#3a4250" />
<rect x="1810" y="998.3" width="24" height="23.4" fill="#3a4250" />
<rect x="1837" y="998.3" width="21.700000000000045" height="23.4" fill="#3a4250" />
<rect x="1861.8" y="998.3" width="47.90000000000009" height="23.4" fill="#3a4250" />
<rect x="1566.9" y="998.3" width="22" height="23.4" fill="#5b8dc5" />
<rect x="1590.9" y="998.3" width="22" height="23.4" fill="#5b8dc5" />
<rect x="1634.2" y="998.3" width="21.8" height="23.4" fill="#5b8dc5" />
<path d="M1401.5,1003 L1401.5,1017 M1405.5,1003 L1405.5,1017 M1409.5,1003 L1409.5,1017 M1398,1006.5 L1413,1006.5 M1398,1010.5 L1413,1010.5 M1398,1014.5 L1413,1014.5" stroke="#e0e0e0" stroke-width="1.2"/>
<rect x="1423.5" y="1003.5" width="2" height="2" fill="#e0e0e0" />
<rect x="1423.5" y="1009" width="2" height="2" fill="#e0e0e0" />
<rect x="1423.5" y="1014.5" width="2" height="2" fill="#e0e0e0" />
<rect x="1429" y="1003.5" width="2" height="2" fill="#e0e0e0" />
<rect x="1429" y="1009" width="2" height="2" fill="#e0e0e0" />
<rect x="1429" y="1014.5" width="2" height="2" fill="#e0e0e0" />
<rect x="1434.5" y="1003.5" width="2" height="2" fill="#e0e0e0" />
<rect x="1434.5" y="1009" width="2" height="2" fill="#e0e0e0" />
<rect x="1434.5" y="1014.5" width="2" height="2" fill="#e0e0e0" />
<polygon points="1446.25,1008.375 1452.75,1008.375 1449.5,1011.625" fill="#dcdcdc"/>
<path d="M1465.5,1003 L1465.5,1017.5 L1481,1017.5 M1465.5,1012 L1470,1012 L1470,1017.5" stroke="#e0e0e0" stroke-width="1.2" fill="none"/>
<circle cx="1495.5" cy="1012" r="6.5" fill="none" stroke="#e0e0e0" stroke-width="1.2"/><path d="M1495.5,1012 L1503,1003 M1495.5,1012 L1505,1012" stroke="#e0e0e0" stroke-width="1.2"/>
<polygon points="1513.25,1008.375 1519.75,1008.375 1516.5,1011.625" fill="#dcdcdc"/>
<path d="M1530,1003 L1542,1017" stroke="#e05050" stroke-width="1.2"/><path d="M1536.5,1002 L1536.5,1018" stroke="#40c040" stroke-width="1.2"/><rect x="1535" y="1008.5" width="3" height="3" fill="#333" stroke="#eee" stroke-width="0.8"/>
<polygon points="1553.25,1008.375 1559.75,1008.375 1556.5,1011.625" fill="#dcdcdc"/>
<path d="M1570,1016 L1582,1016 M1570,1016 L1580,1005" stroke="#f0f0f0" stroke-width="1.3" fill="none"/><rect x="1574" y="1009.5" width="2.5" height="2.5" fill="#f0f0f0"/>
<rect x="1596.5" y="1004.5" width="12" height="13" fill="none" stroke="#f0f0f0" stroke-width="1.3"/><rect x="1594" y="1002" width="4" height="4" fill="#5b8dc5" stroke="#f0f0f0" stroke-width="1.1"/>
<polygon points="1618.25,1008.375 1624.75,1008.375 1621.5,1011.625" fill="#dcdcdc"/>
<polygon points="1644,1002.3 1645.5,1007 1646.6,1009 1646,1011 1651.2,1018 1644,1014.2 1636.8,1018 1642,1011 1641.4,1009 1642.5,1007" fill="#e6e6e6"/>
<polygon points="1668,1002.3 1669.5,1007 1670.6,1009 1670,1011 1675.2,1018 1668,1014.2 1660.8,1018 1666,1011 1665.4,1009 1666.5,1007" fill="#e6e6e6"/>
<polygon points="1693,1002.3 1694.5,1007 1695.6,1009 1695,1011 1700.2,1018 1693,1014.2 1685.8,1018 1691,1011 1690.4,1009 1691.5,1007" fill="#e6e6e6"/>
<circle cx="1650.1" cy="1006" r="2.5" fill="none" stroke="#f4f4f4" stroke-width="1.1"/>
<polygon points="1673.5,1002 1676.5,1002 1674.5,1005.5 1677,1005.5 1672.5,1010.5 1673.5,1006.8 1671.5,1006.8" fill="#e6e6e6"/>
<polygon points="1727.75,1008.375 1734.25,1008.375 1731,1011.625" fill="#dcdcdc"/>
<g fill="#e0e0e0"><circle cx="1753.5" cy="1010" r="6"/><path d="M1752,1002 L1755,1002 L1755,1018 L1752,1018Z M1745.5,1008.5 L1761.5,1008.5 L1761.5,1011.5 L1745.5,1011.5Z" /><path d="M1747.5,1004 L1749.5,1002 L1760,1016 L1758,1018Z M1759.5,1004 L1757.5,1002 L1747,1016 L1749,1018Z" opacity="0"/></g><circle cx="1753.5" cy="1010" r="2.5" fill="#3a4250"/>
<g stroke="#e0e0e0" stroke-width="2.6"><line x1="1748" y1="1004.5" x2="1759" y2="1015.5"/><line x1="1759" y1="1004.5" x2="1748" y2="1015.5"/></g><circle cx="1753.5" cy="1010" r="5" fill="#e0e0e0"/><circle cx="1753.5" cy="1010" r="2.5" fill="#3a4250"/>
<polygon points="1770.25,1008.375 1776.75,1008.375 1773.5,1011.625" fill="#dcdcdc"/>
<path d="M1795,1002 L1795,1018 M1787,1010 L1803,1010" stroke="#e8e8e8" stroke-width="1.5"/>
<rect x="1814.5" y="1002.5" width="6" height="6" fill="none" stroke="#e0e0e0" stroke-width="1.1"/><circle cx="1826" cy="1008" r="3" fill="none" stroke="#e0e0e0" stroke-width="1.1"/><polygon points="1820,1012 1823,1017.5 1817,1017.5" fill="none" stroke="#e0e0e0" stroke-width="1.1"/>
<rect x="1840" y="1002" width="14" height="12" fill="#3d6cb0"/><path d="M1843.5,1001 L1843.5,1009 M1840,1005 L1847,1005" stroke="#fff" stroke-width="1"/><rect x="1840" y="1012" width="6" height="5" fill="#f3c040"/><path d="M1847,1014 L1849.5,1017 L1855,1011" stroke="#40c040" stroke-width="1.8" fill="none"/>
<rect x="1866.5" y="1004" width="15" height="11.5" fill="none" stroke="#e0e0e0" stroke-width="1.2"/><path d="M1870,1013 L1873.5,1009.5 M1878.5,1006 L1875,1009.5" stroke="#e0e0e0" stroke-width="1"/><polygon points="1869.5,1013.5 1869.5,1010.5 1872.5,1013.5" fill="#e0e0e0"/><polygon points="1879,1005.5 1879,1008.5 1876,1005.5" fill="#e0e0e0"/>
<path d="M1890,1003.5 L1906,1003.5 M1890,1009.5 L1906,1009.5 M1890,1015.5 L1906,1015.5" stroke="#e8e8e8" stroke-width="2"/>
</svg>
<div class="t" style="left:331px;top:7.5px;font-size:12px;color:#70c2f5;font-weight:400;">Share</div>
<div class="t" style="left:746px;top:7px;font-size:12px;color:#f2f2f2;font-weight:400;">Autodesk AutoCAD 2023</div>
<div class="t" style="left:888px;top:7px;font-size:12px;color:#f2f2f2;font-weight:400;">S&#243;lidos.dwg</div>
<div class="t" style="left:1351px;top:8px;font-size:10.5px;color:#9aa3ae;font-weight:400;font-style:italic">Type a keyword or phrase</div>
<div class="t" style="left:1576px;top:8px;font-size:12px;color:#f2f2f2;font-weight:400;">gabebrandon18</div>
<div class="t" style="left:17px;top:35px;font-size:12px;color:#f4f4f4;font-weight:400;">Home</div>
<div class="t" style="left:70px;top:35px;font-size:12px;color:#dfe3e8;font-weight:400;">Insert</div>
<div class="t" style="left:119px;top:35px;font-size:12px;color:#dfe3e8;font-weight:400;">Annotate</div>
<div class="t" style="left:188px;top:35px;font-size:12px;color:#dfe3e8;font-weight:400;">Parametric</div>
<div class="t" style="left:265px;top:35px;font-size:12px;color:#dfe3e8;font-weight:400;">View</div>
<div class="t" style="left:310px;top:35px;font-size:12px;color:#dfe3e8;font-weight:400;">Manage</div>
<div class="t" style="left:373px;top:35px;font-size:12px;color:#dfe3e8;font-weight:400;">Output</div>
<div class="t" style="left:431px;top:35px;font-size:12px;color:#dfe3e8;font-weight:400;">Add-ins</div>
<div class="t" style="left:493px;top:35px;font-size:12px;color:#dfe3e8;font-weight:400;">Collaborate</div>
<div class="t" style="left:574px;top:35px;font-size:12px;color:#dfe3e8;font-weight:400;">Express Tools</div>
<div class="t" style="left:663px;top:35px;font-size:12px;color:#dfe3e8;font-weight:400;">Featured Apps</div>
<div class="t" style="left:-72.5px;width:200px;text-align:center;top:96px;font-size:12px;color:#f2f2f2;font-weight:400;">Line</div>
<div class="t" style="left:-30px;width:200px;text-align:center;top:96px;font-size:12px;color:#f2f2f2;font-weight:400;">Polyline</div>
<div class="t" style="left:20px;width:200px;text-align:center;top:96px;font-size:12px;color:#f2f2f2;font-weight:400;">Circle</div>
<div class="t" style="left:66px;width:200px;text-align:center;top:96px;font-size:12px;color:#f2f2f2;font-weight:400;">Arc</div>
<div class="t" style="left:97px;top:134px;font-size:12px;color:#eceff2;font-weight:400;">Draw</div>
<div class="t" style="left:258px;top:62px;font-size:12px;color:#f2f2f2;font-weight:400;">Move</div>
<div class="t" style="left:330px;top:62px;font-size:12px;color:#f2f2f2;font-weight:400;">Rotate</div>
<div class="t" style="left:399.5px;top:62px;font-size:12px;color:#f2f2f2;font-weight:400;">Trim</div>
<div class="t" style="left:258px;top:86px;font-size:12px;color:#f2f2f2;font-weight:400;">Copy</div>
<div class="t" style="left:330px;top:86px;font-size:12px;color:#f2f2f2;font-weight:400;">Mirror</div>
<div class="t" style="left:399.5px;top:86px;font-size:12px;color:#f2f2f2;font-weight:400;">Fillet</div>
<div class="t" style="left:258px;top:110px;font-size:12px;color:#f2f2f2;font-weight:400;">Stretch</div>
<div class="t" style="left:330px;top:110px;font-size:12px;color:#f2f2f2;font-weight:400;">Scale</div>
<div class="t" style="left:399.5px;top:110px;font-size:12px;color:#f2f2f2;font-weight:400;">Array</div>
<div class="t" style="left:329.5px;top:134px;font-size:12px;color:#eceff2;font-weight:400;">Modify</div>
<div class="t" style="left:404px;width:200px;text-align:center;top:96px;font-size:12px;color:#f2f2f2;font-weight:400;">Text</div>
<div class="t" style="left:456px;width:200px;text-align:center;top:96px;font-size:12px;color:#f2f2f2;font-weight:400;">Dimension</div>
<div class="t" style="left:614px;top:62px;font-size:12px;color:#f2f2f2;font-weight:400;">Linear</div>
<div class="t" style="left:614px;top:86px;font-size:12px;color:#f2f2f2;font-weight:400;">Leader</div>
<div class="t" style="left:614px;top:110px;font-size:12px;color:#f2f2f2;font-weight:400;">Table</div>
<div class="t" style="left:537px;top:134px;font-size:12px;color:#eceff2;font-weight:400;">Annotation</div>
<div class="t" style="left:600.5px;width:200px;text-align:center;top:97px;font-size:12px;color:#f2f2f2;font-weight:400;">Layer</div>
<div class="t" style="left:600.5px;width:200px;text-align:center;top:111px;font-size:12px;color:#f2f2f2;font-weight:400;">Properties</div>
<div class="t" style="left:813.5px;top:62px;font-size:12px;color:#f2f2f2;font-weight:400;">Tetaedro</div>
<div class="t" style="left:852.5px;top:86.5px;font-size:12px;color:#f2f2f2;font-weight:400;">Make Current</div>
<div class="t" style="left:852.5px;top:110px;font-size:12px;color:#f2f2f2;font-weight:400;">Match Layer</div>
<div class="t" style="left:782px;top:134px;font-size:12px;color:#eceff2;font-weight:400;">Layers</div>
<div class="t" style="left:863.5px;width:200px;text-align:center;top:96px;font-size:12px;color:#f2f2f2;font-weight:400;">Insert</div>
<div class="t" style="left:1008px;top:62px;font-size:12px;color:#f2f2f2;font-weight:400;">Create</div>
<div class="t" style="left:1008px;top:86px;font-size:12px;color:#f2f2f2;font-weight:400;">Edit</div>
<div class="t" style="left:1008px;top:110px;font-size:12px;color:#f2f2f2;font-weight:400;">Edit Attributes</div>
<div class="t" style="left:1001.5px;top:134px;font-size:12px;color:#eceff2;font-weight:400;">Block</div>
<div class="t" style="left:1035px;width:200px;text-align:center;top:96px;font-size:12px;color:#f2f2f2;font-weight:400;">Match</div>
<div class="t" style="left:1035px;width:200px;text-align:center;top:111px;font-size:12px;color:#f2f2f2;font-weight:400;">Properties</div>
<div class="t" style="left:1212px;top:62px;font-size:12px;color:#f2f2f2;font-weight:400;">ByLayer</div>
<div class="t" style="left:1258px;top:86px;font-size:12px;color:#f2f2f2;font-weight:400;">ByLayer</div>
<div class="t" style="left:1258px;top:110px;font-size:12px;color:#f2f2f2;font-weight:400;">ByLayer</div>
<div class="t" style="left:1196px;top:134px;font-size:12px;color:#eceff2;font-weight:400;">Properties</div>
<div class="t" style="left:1289.5px;width:200px;text-align:center;top:96px;font-size:12px;color:#f2f2f2;font-weight:400;">Group</div>
<div class="t" style="left:1376.5px;top:134px;font-size:12px;color:#eceff2;font-weight:400;">Groups</div>
<div class="t" style="left:1372.5px;width:200px;text-align:center;top:96px;font-size:12px;color:#f2f2f2;font-weight:400;">Measure</div>
<div class="t" style="left:1458.5px;top:134px;font-size:12px;color:#eceff2;font-weight:400;">Utilities</div>
<div class="t" style="left:1461px;width:200px;text-align:center;top:96px;font-size:12px;color:#f2f2f2;font-weight:400;">Paste</div>
<div class="t" style="left:1553px;top:134px;font-size:12px;color:#eceff2;font-weight:400;">Clipboard</div>
<div class="t" style="left:1556px;width:200px;text-align:center;top:96px;font-size:12px;color:#f2f2f2;font-weight:400;">Base</div>
<div class="t" style="left:1630px;top:134px;font-size:12px;color:#eceff2;font-weight:400;">View</div>
<div class="t" style="left:29px;top:159px;font-size:12px;color:#e8ecf0;font-weight:400;">Start</div>
<div class="t" style="left:76.5px;top:159px;font-size:12px;color:#ffffff;font-weight:700;letter-spacing:-0.5px;-webkit-text-stroke:0;">S&#243;lidos*</div>
<div class="t" style="left:157px;top:159px;font-size:12px;color:#e8ecf0;font-weight:400;">Drawing1*</div>
<div class="t" style="left:8.5px;top:187.8px;font-size:12px;color:#d4d4d4;font-weight:400;">[&#8722;][Custom View][X-Ray]</div>
<div class="t" style="left:190.5px;top:666px;font-size:11px;letter-spacing:-0.35px;color:#c8ccd2;transform:translate(-50%,-50%) rotate(-90deg);width:auto">LAYER PROPERTIES MANAGER</div>
<div class="t" style="left:1800px;top:376px;font-size:10.5px;color:#676b78;font-weight:400;">Unnamed</div>
<div class="t" style="left:426px;top:940px;font-size:12px;color:#111111;font-weight:400;letter-spacing:-0.45px;font-family:'Liberation Mono',monospace">Command:</div>
<div class="t" style="left:426px;top:954.5px;font-size:12px;color:#111111;font-weight:400;letter-spacing:-0.45px;font-family:'Liberation Mono',monospace">Command:</div>
<div class="t" style="left:460.5px;top:974px;font-size:11.5px;color:#777777;font-weight:400;font-family:'Liberation Mono',monospace;font-style:italic;word-spacing:0px">Type a command</div>
<div class="t" style="left:29.4px;top:1001.5px;font-size:12px;color:#ffffff;font-weight:700;letter-spacing:-0.3px;-webkit-text-stroke:0;">Model</div>
<div class="t" style="left:88.7px;top:1001.5px;font-size:12px;color:#e8ecf0;font-weight:400;">AAA3</div>
<div class="t" style="left:142px;top:1001.5px;font-size:12px;color:#e8ecf0;font-weight:400;">Layout2</div>
<div class="t" style="left:1347.5px;top:1003px;font-size:12px;color:#f0f0f0;font-weight:400;">MODEL</div>
<div class="t" style="left:1709.5px;top:1003px;font-size:12px;color:#e8e8e8;font-weight:400;">1:1</div>
</body></html>
